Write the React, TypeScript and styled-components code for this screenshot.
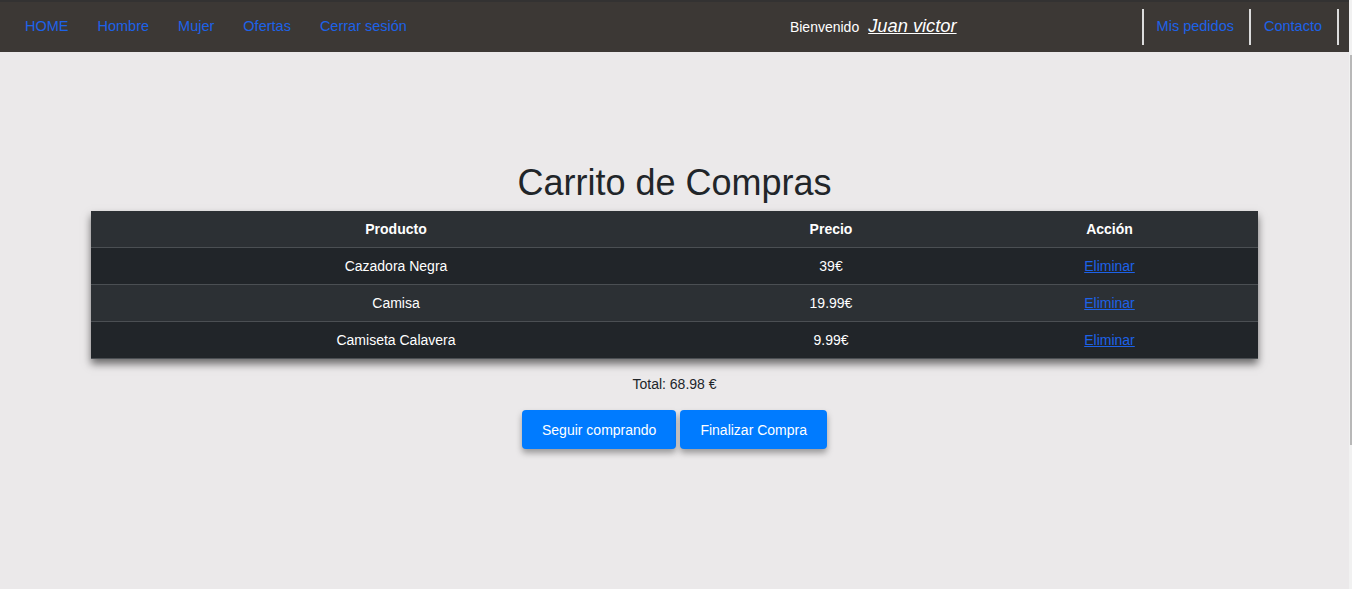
import React from "react";
import styled, { createGlobalStyle } from "styled-components";

const Global = createGlobalStyle`
  html, body { margin: 0; padding: 0; }
  body {
    background: #ebe9ea;
    font-family: "Liberation Sans", Arial, sans-serif;
    color: #212529;
    overflow: hidden;
  }
`;

const Shell = styled.div`
  display: grid;
  grid-template-columns: 1fr 3px;
  height: 589px;
`;

const Page = styled.div`
  display: flex;
  flex-direction: column;
  min-width: 0;
`;

const ScrollTrack = styled.div`
  background: #f1f1f1;
  padding-top: 55px;
  display: flex;
  justify-content: flex-end;
`;

const ScrollThumb = styled.div`
  width: 2px;
  height: 390px;
  background: #b8b8b8;
`;

const Nav = styled.nav`
  height: 48px;
  padding: 0 10px 2px 25px;
  border-top: 2px solid #333232;
  background: #3c3835;
  display: flex;
  align-items: center;
`;

const NavGroup = styled.ul`
  list-style: none;
  margin: 0;
  padding: 0;
  display: flex;
  align-items: center;
  gap: 29px;
`;

const NavLink = styled.a`
  color: #1d62e8;
  text-decoration: none;
  font-size: 14.5px;
`;

const Welcome = styled.div`
  margin-left: auto;
  display: flex;
  align-items: baseline;
  gap: 9px;
  color: #fff;
  font-size: 14px;
`;

const UserName = styled.span`
  font-size: 18.3px;
  font-style: italic;
  text-decoration: underline;
`;

const RightGroup = styled.ul`
  list-style: none;
  margin: 2px 0 0 185px;
  padding: 0;
  display: flex;
  height: 36px;
`;

const RightItem = styled.li<{ $last?: boolean }>`
  display: flex;
  align-items: center;
  padding: 0 15px 2px 13px;
  border-left: 2px solid #dcdcdc;
  border-right: ${(p) => (p.$last ? "2px solid #dcdcdc" : "none")};
`;

const Main = styled.main`
  display: flex;
  flex-direction: column;
  align-items: center;
  padding-top: 107px;
`;

const Title = styled.h1`
  margin: 0 0 4px;
  font-size: 36px;
  font-weight: 400;
  line-height: 48px;
  color: #212529;
`;

const Table = styled.table`
  width: 1167px;
  border-collapse: collapse;
  color: #fff;
  font-size: 14px;
  box-shadow: 0 5px 8px rgba(0, 0, 0, 0.55);
`;

const HeadCell = styled.th<{ $w: number }>`
  width: ${(p) => p.$w}px;
  height: 36px;
  padding: 0;
  font-weight: 700;
  text-align: center;
  background: #2c3034;
  border-bottom: 1px solid #4b4f53;
`;

const Row = styled.tr<{ $alt: boolean }>`
  background: ${(p) => (p.$alt ? "#2c3034" : "#212529")};
`;

const Cell = styled.td`
  height: 36px;
  padding: 0;
  text-align: center;
  border-bottom: 1px solid #4b4f53;
`;

const RemoveLink = styled.a`
  color: #1d62e8;
  text-decoration: underline;
`;

const Total = styled.p`
  margin: 17px 0 0;
  font-size: 14px;
  line-height: 16px;
  color: #212529;
`;

const Actions = styled.div`
  display: flex;
  gap: 4px;
  margin-top: 18px;
`;

const Button = styled.button`
  height: 39px;
  padding: 0 20px;
  border: none;
  border-radius: 4px;
  background: #007bff;
  color: #fff;
  font-family: "Liberation Sans", Arial, sans-serif;
  font-size: 14px;
  box-shadow: 0 4px 6px rgba(0, 0, 0, 0.35);
  cursor: pointer;
`;

const items = [
  { name: "Cazadora Negra", price: "39€" },
  { name: "Camisa", price: "19.99€" },
  { name: "Camiseta Calavera", price: "9.99€" },
];

export default function App() {
  return (
    <>
      <Global />
      <Shell>
        <Page>
          <Nav>
            <NavGroup>
              {["HOME", "Hombre", "Mujer", "Ofertas", "Cerrar sesión"].map((t) => (
                <li key={t}>
                  <NavLink href="#">{t}</NavLink>
                </li>
              ))}
            </NavGroup>
            <Welcome>
              <span>Bienvenido</span>
              <UserName>Juan victor</UserName>
            </Welcome>
            <RightGroup>
              <RightItem>
                <NavLink href="#">Mis pedidos</NavLink>
              </RightItem>
              <RightItem $last>
                <NavLink href="#">Contacto</NavLink>
              </RightItem>
            </RightGroup>
          </Nav>
          <Main>
            <Title>Carrito de Compras</Title>
            <Table>
              <thead>
                <tr>
                  <HeadCell $w={610}>Producto</HeadCell>
                  <HeadCell $w={260}>Precio</HeadCell>
                  <HeadCell $w={297}>Acción</HeadCell>
                </tr>
              </thead>
              <tbody>
                {items.map((it, i) => (
                  <Row key={it.name} $alt={i % 2 === 1}>
                    <Cell>{it.name}</Cell>
                    <Cell>{it.price}</Cell>
                    <Cell>
                      <RemoveLink href="#">Eliminar</RemoveLink>
                    </Cell>
                  </Row>
                ))}
              </tbody>
            </Table>
            <Total>Total: 68.98 €</Total>
            <Actions>
              <Button>Seguir comprando</Button>
              <Button>Finalizar Compra</Button>
            </Actions>
          </Main>
        </Page>
        <ScrollTrack>
          <ScrollThumb />
        </ScrollTrack>
      </Shell>
    </>
  );
}
